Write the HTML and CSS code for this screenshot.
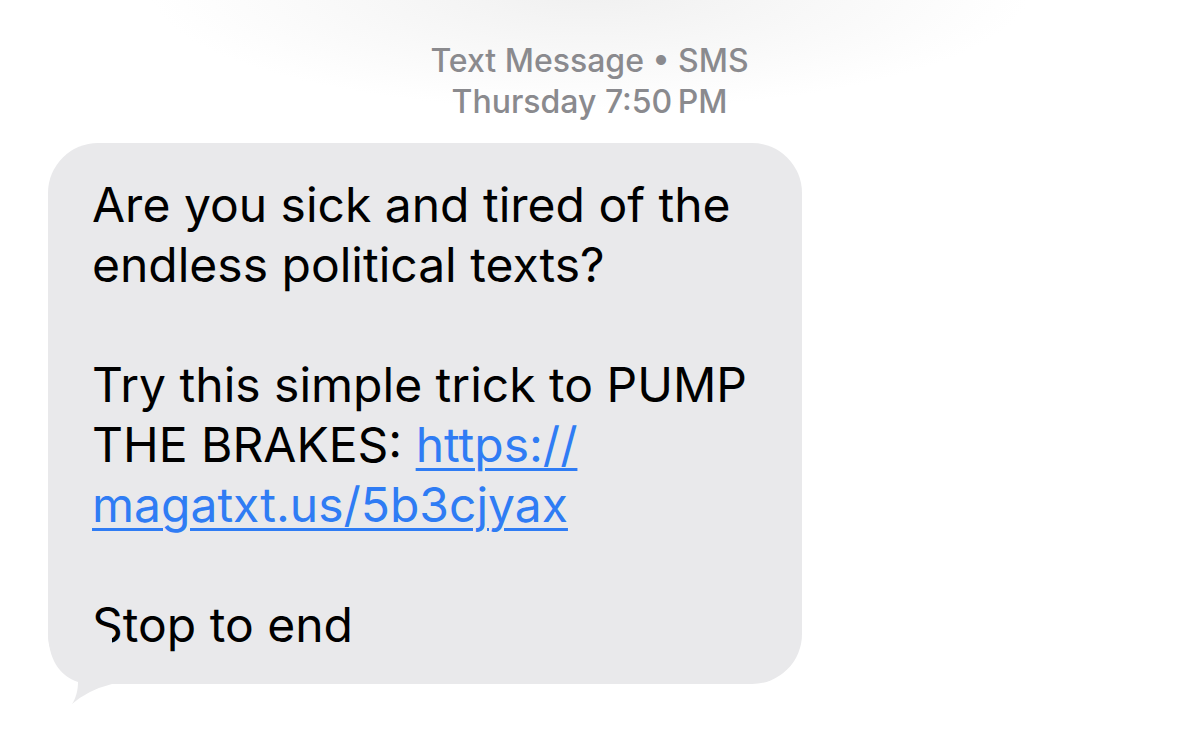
FILE: index.html
```html
<!DOCTYPE html>
<html lang="en">
<head>
  <meta charset="UTF-8">
  <title>Messages</title>
  <link rel="stylesheet" href="styles.css">
</head>
<body>
  <div class="thread">
    <div class="meta">
      <div>Text Message &bull; SMS</div>
      <div>Thursday 7:50&#8201;PM</div>
    </div>

    <div class="bubble">
      <p>Are you sick and tired of the endless political texts?</p>
      <p>Try this simple trick to PUMP THE BRAKES: <a href="#">https://<br>magatxt.us/5b3cjyax</a></p>
      <p>Stop to end</p>
      <svg class="tail" width="70" height="80" viewBox="0 0 70 80">
        <path d="M0,6 C0,36 12,52 30,58 C30,66 28,74 24,80 Q40,66 64,60 L64,6 Z" />
      </svg>
    </div>
  </div>
</body>
</html>
```

FILE: styles.css
```css
body {
  margin: 0;
  font-family: Inter, "Noto Sans", sans-serif;
  background: radial-gradient(ellipse 440px 120px at 590px -10px, #f0f0f0, #fff);
  min-height: 736px;
}
.thread {
  padding: 40px 0 0 48px;
}
.meta {
  width: 1083px;
  text-align: center;
  color: #8a8a8e;
  font-size: 32px;
  font-weight: 500;
  line-height: 41px;
  margin-bottom: 21px;
}
.bubble {
  position: relative;
  box-sizing: border-box;
  width: 754px;
  background: #e9e9eb;
  border-radius: 50px;
  padding: 32px 30px 29px 44px;
  color: #000;
  font-size: 48px;
  line-height: 60px;
}
.bubble p {
  margin: 0 0 60px;
}
.bubble p:last-of-type {
  margin-bottom: 0;
}
.bubble a {
  color: #2f7cf4;
  text-decoration: underline;
  text-decoration-thickness: 3px;
  text-underline-offset: 6px;
}
.tail {
  position: absolute;
  left: 0;
  bottom: -20px;
  fill: #e9e9eb;
}
```
